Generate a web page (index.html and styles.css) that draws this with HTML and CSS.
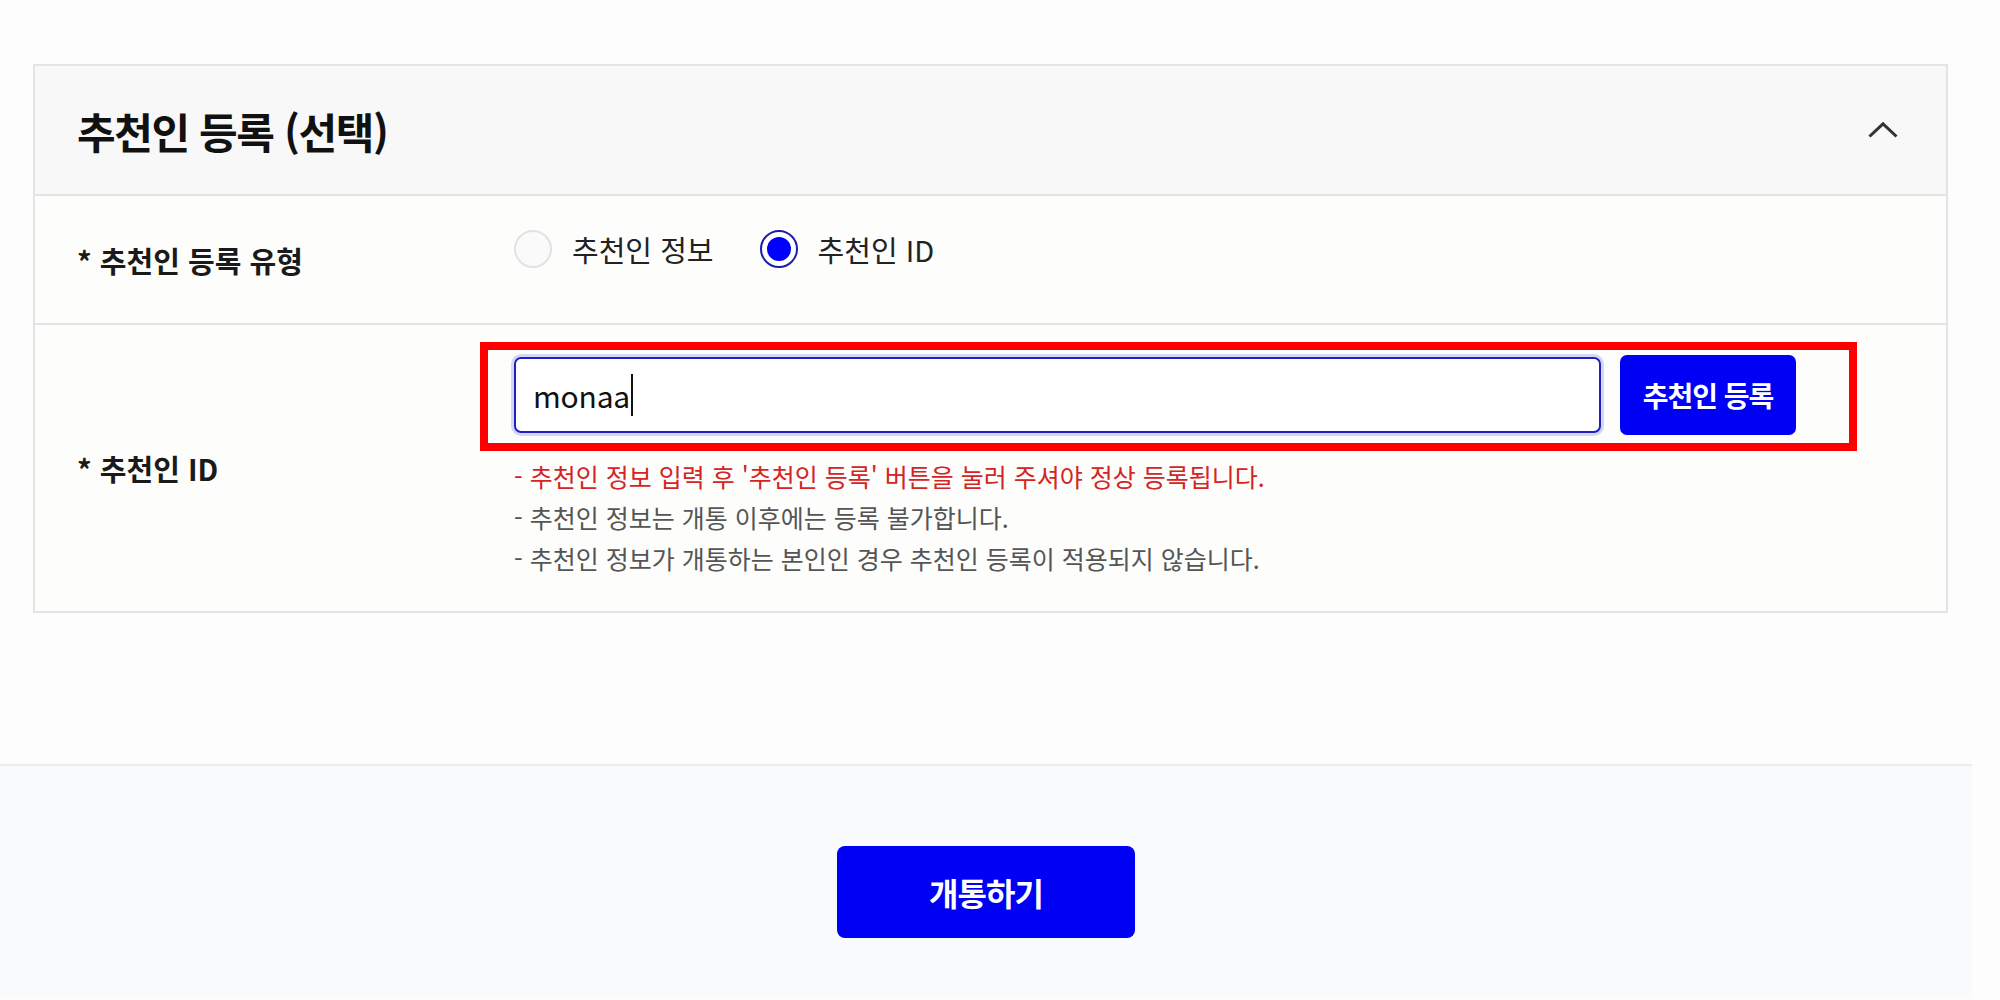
FILE: index.html
```html
<!DOCTYPE html>
<html lang="ko">
<head>
<meta charset="utf-8">
<title>추천인 등록</title>
<link rel="stylesheet" href="styles.css">
</head>
<body>
<div class="page">
  <section class="card">
    <header class="card-head">
      <h2 class="card-title">추천인 등록 (선택)</h2>
      <button class="toggle" type="button" aria-label="접기">
        <svg width="30" height="16" viewBox="0 0 30 16"><polyline points="1.5,14.5 15,1.8 28.5,14.5" fill="none" stroke="#333" stroke-width="3"/></svg>
      </button>
    </header>
    <div class="row row-type">
      <div class="label">* 추천인 등록 유형</div>
      <div class="field radios">
        <label class="radio"><span class="dot"></span><span class="radio-text">추천인 정보</span></label>
        <label class="radio checked"><span class="dot"></span><span class="radio-text">추천인 ID</span></label>
      </div>
    </div>
    <div class="row row-id">
      <div class="label">* 추천인 ID</div>
      <div class="field">
        <div class="input-row">
          <div class="text-input"><span class="value">monaa</span><span class="caret"></span></div>
          <button class="btn-register" type="button">추천인 등록</button>
          <div class="highlight"></div>
        </div>
        <ul class="notes">
          <li class="warn">- 추천인 정보 입력 후 '추천인 등록' 버튼을 눌러 주셔야 정상 등록됩니다.</li>
          <li>- 추천인 정보는 개통 이후에는 등록 불가합니다.</li>
          <li>- 추천인 정보가 개통하는 본인인 경우 추천인 등록이 적용되지 않습니다.</li>
        </ul>
      </div>
    </div>
  </section>
</div>
<footer class="footer">
  <button class="submit" type="button">개통하기</button>
</footer>
</body>
</html>
```
FILE: styles.css
```css
* { box-sizing: border-box; }
html, body { margin: 0; padding: 0; }
body {
  background: #fdfdfd;
  font-family: "Noto Sans CJK KR", "Noto Sans", sans-serif;
  color: #1a1a1a;
  width: 2000px;
  height: 1000px;
  overflow: hidden;
}
.page {
  width: 1981px;
  padding: 64px 33px 0;
}
.card {
  border: 2px solid #e4e4e4;
  background: #fdfdfc;
  margin-bottom: 151px;
}
.card-head {
  height: 130px;
  background: #f8f8f8;
  border-bottom: 2px solid #e4e4e4;
  display: flex;
  align-items: center;
  justify-content: space-between;
  padding: 0 34px 0 42px;
}
.card-title {
  margin: 0;
  font-size: 42px;
  font-weight: 700;
  letter-spacing: -1.4px;
  color: #111;
}
.toggle {
  border: 0;
  background: transparent;
  padding: 10px 14px;
  display: flex;
}
.row {
  display: grid;
  grid-template-columns: 479px 1fr;
  align-items: center;
}
.row-type {
  height: 129px;
  border-bottom: 2px solid #e4e4e4;
}
.row-id {
  height: 286px;
}
.label {
  padding-left: 42px;
  font-size: 29px;
  font-weight: 700;
  letter-spacing: 0;
  color: #1a1a1a;
}
.radios {
  display: flex;
  align-items: center;
  gap: 46px;
  margin-bottom: 22px;
}
.radio {
  display: flex;
  align-items: center;
  gap: 20px;
}
.dot {
  width: 38px;
  height: 38px;
  border-radius: 50%;
  border: 2px solid #e2e2e2;
  background: #fafafa;
  display: flex;
  align-items: center;
  justify-content: center;
}
.radio.checked .dot {
  border: 2px solid #1c1ca8;
  background: #fff;
}
.radio.checked .dot::after {
  content: "";
  width: 24px;
  height: 24px;
  border-radius: 50%;
  background: #0000ff;
}
.radio-text {
  font-size: 29px;
  letter-spacing: 0;
  color: #222;
}
.input-row {
  position: relative;
  display: flex;
  align-items: center;
  gap: 19px;
  width: 1282px;
  margin-top: -3px;
}
.text-input {
  flex: 1;
  height: 76px;
  border: 2px solid #2020c0;
  border-radius: 7px;
  box-shadow: 0 0 0 3px #d6d6f6;
  background: #fff;
  display: flex;
  align-items: center;
  padding-left: 17px;
  font-size: 30px;
  color: #111;
  letter-spacing: -0.2px;
}
.caret {
  width: 2px;
  height: 42px;
  background: #111;
  margin-left: 1px;
}
.btn-register {
  width: 176px;
  height: 80px;
  border: 0;
  border-radius: 7px;
  background: #0000f5;
  color: #fff;
  font-family: inherit;
  font-size: 28px;
  font-weight: 700;
  letter-spacing: -1px;
}
.highlight {
  position: absolute;
  top: -13px;
  left: -34px;
  right: -61px;
  bottom: -16px;
  border: 8px solid #ff0000;
  pointer-events: none;
}
.notes {
  list-style: none;
  margin: 21px 0 0;
  padding: 0;
  font-size: 25px;
  line-height: 41px;
  letter-spacing: 0;
  color: #555;
}
.notes .warn { color: #d42424; }
.footer {
  width: 1972px;
  height: 235px;
  background: #f9fafb;
  border-top: 2px solid #ececec;
  display: flex;
  justify-content: center;
  padding-top: 80px;
}
.submit {
  width: 298px;
  height: 92px;
  border: 0;
  border-radius: 8px;
  background: #0000f5;
  color: #fff;
  font-family: inherit;
  font-size: 32px;
  font-weight: 700;
  letter-spacing: -1px;
}
```
